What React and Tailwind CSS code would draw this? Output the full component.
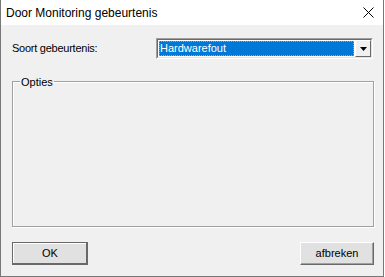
import React from "react";

const Dialog = () => {
  return (
    <div className="w-[384px] h-[277px] flex flex-col border-l border-r border-b border-[#777777] bg-[#f0f0f0]">
      <div className="h-[25px] bg-white flex items-center justify-between pl-[5px] pr-[9px]">
        <span className="text-[12px] text-black" style={{ fontFamily: '"Liberation Sans", Arial, sans-serif' }}>
          Door Monitoring gebeurtenis
        </span>
        <svg width="11" height="11" viewBox="0 0 11 11">
          <path d="M0.5 0.5 L10.5 10.5 M10.5 0.5 L0.5 10.5" stroke="#000" strokeWidth="1" />
        </svg>
      </div>

      <div className="flex-1 flex flex-col pl-[11px] pr-[9px] text-[11px] text-black" style={{ fontFamily: '"Liberation Sans", Arial, sans-serif' }}>
        <div className="flex items-start mt-[13px]">
          <span className="w-[144px] pt-[2px] tracking-[-0.25px]">Soort gebeurtenis:</span>
          <div className="w-[217px] h-[21px] flex border-t border-l border-[#a0a0a0] border-b border-r border-b-white border-r-white">
            <div className="flex-1 flex border-t border-l border-[#696969] border-b border-r border-b-[#e3e3e3] border-r-[#e3e3e3] bg-white">
              <div className="flex-1 m-[1px] bg-[#0078d7] text-white flex items-center pl-[1px] outline-1 outline-dotted outline-[#f0a000] -outline-offset-1">
                Hardwarefout
              </div>
              <div className="w-[16px] flex items-center justify-center bg-[#f0f0f0] border-t border-l border-white border-b border-r border-b-[#696969] border-r-[#696969]">
                <svg width="7" height="4" viewBox="0 0 7 4">
                  <path d="M0 0 H7 L3.5 4 Z" fill="#000" />
                </svg>
              </div>
            </div>
          </div>
        </div>

        <div className="relative mt-[22px] h-[146px] border border-[#a0a0a0] shadow-[1px_1px_0_#ffffff,inset_1px_1px_0_#ffffff]">
          <span className="absolute -top-[8px] left-[7px] px-[1px] bg-[#f0f0f0]">Opties</span>
        </div>

        <div className="flex justify-between mt-[15px]">
          <button className="w-[76px] h-[23px] border border-[#696969] bg-[#e1e1e1] shadow-[inset_-1px_-1px_0_#696969,inset_1px_1px_0_#ffffff] text-[11px]">
            OK
          </button>
          <button className="w-[74px] h-[23px] bg-[#e1e1e1] border-t border-l border-white border-b border-r border-b-[#696969] border-r-[#696969] shadow-[inset_-1px_-1px_0_#a0a0a0] text-[11px]">
            afbreken
          </button>
        </div>
      </div>
    </div>
  );
};

export default function App() {
  return <Dialog />;
}
